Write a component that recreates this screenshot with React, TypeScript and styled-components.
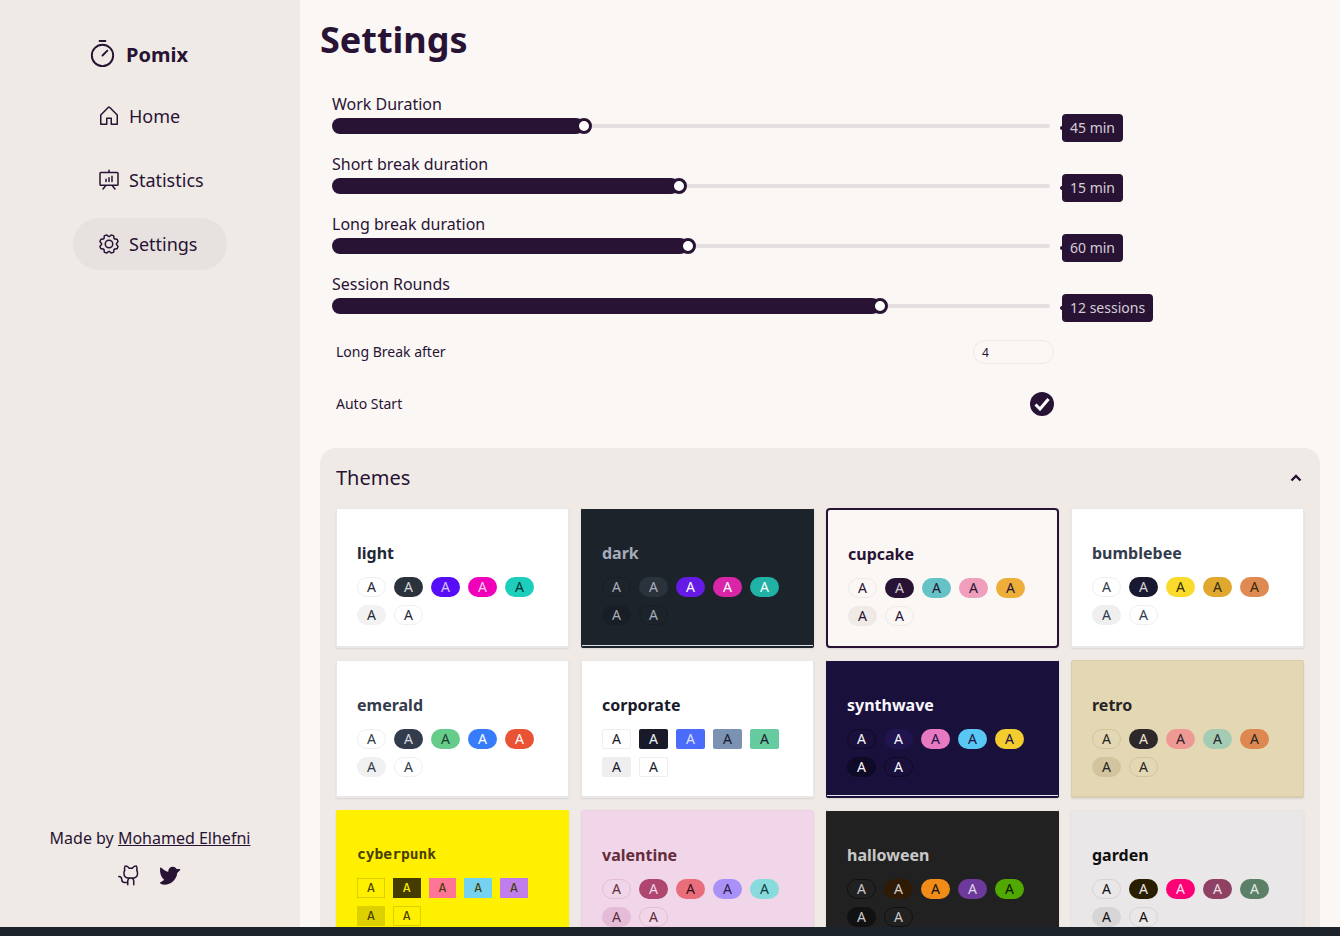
import React from 'react';
import styled, { createGlobalStyle } from 'styled-components';
import {
  PiGear,
  PiGithubLogo,
  PiHouse,
  PiPresentationChart,
  PiTimer,
  PiTwitterLogoFill,
} from 'react-icons/pi';

const ink = '#291334';
const panel = '#efeae6';
const paper = '#faf7f5';
const mono = "'DejaVu Sans Mono', monospace";

const GlobalStyle = createGlobalStyle`
  html, body {
    margin: 0;
    height: 100%;
    background: #1d232a;
    overflow: hidden;
  }
  * {
    box-sizing: border-box;
  }
  body {
    font-family: 'Noto Sans', sans-serif;
    color: ${ink};
  }
`;

const Shell = styled.div`
  display: flex;
  height: 927px;
  overflow: hidden;
  background: ${paper};
`;

const Sidebar = styled.aside`
  width: 300px;
  flex-shrink: 0;
  background: ${panel};
  display: flex;
  flex-direction: column;
  align-items: center;
  padding-top: 39px;
`;

const Brand = styled.div`
  display: flex;
  align-items: center;
  gap: 8px;
  height: 30px;
  font-size: 20px;
  font-weight: 700;
  margin: 0 25px 21px 0;
  svg {
    font-size: 31px;
  }
`;

const NavList = styled.nav`
  display: flex;
  flex-direction: column;
  gap: 12px;
  width: 154px;
`;

const NavItem = styled.div<{ $active?: boolean }>`
  display: flex;
  align-items: center;
  gap: 8px;
  height: 52px;
  padding-left: 24px;
  border-radius: 26px;
  font-size: 18px;
  background: ${(p) => (p.$active ? '#e7e2df' : 'transparent')};
  svg {
    font-size: 24px;
  }
`;

const Footer = styled.footer`
  margin-top: auto;
  padding-bottom: 40px;
  display: flex;
  flex-direction: column;
  align-items: center;
  gap: 14px;
  font-size: 16px;
  a {
    color: inherit;
  }
`;

const Socials = styled.div`
  display: flex;
  gap: 15px;
  svg {
    font-size: 24px;
    display: block;
  }
`;

const Main = styled.main`
  flex: 1;
  padding: 14px 20px 0;
  min-width: 0;
`;

const Title = styled.h1`
  margin: 0 0 26px;
  font-size: 36px;
  line-height: 52px;
  font-weight: 700;
`;

const SliderList = styled.div`
  display: flex;
  flex-direction: column;
  gap: 10px;
  padding-left: 12px;
`;

const SliderRow = styled.div`
  height: 50px;
`;

const SliderLabel = styled.div`
  font-size: 16px;
  line-height: 24px;
  height: 24px;
`;

const SliderLine = styled.div`
  display: flex;
  align-items: center;
  gap: 12px;
  height: 26px;
  margin-top: -1px;
`;

const Track = styled.div`
  position: relative;
  width: 718px;
  height: 4px;
  margin-top: -4px;
  border-radius: 2px;
  background: #e4e0e2;
`;

const Fill = styled.div`
  position: absolute;
  left: 0;
  top: -6px;
  height: 16px;
  border-radius: 8px;
  background: ${ink};
`;

const Thumb = styled.div`
  position: absolute;
  right: -8px;
  top: 0;
  width: 16px;
  height: 16px;
  border-radius: 50%;
  background: #fff;
  border: 3px solid ${ink};
`;

const Bubble = styled.div`
  position: relative;
  height: 28px;
  padding: 0 8px 2px;
  display: flex;
  align-items: center;
  border-radius: 4px;
  font-size: 14px;
  color: #d4cdd6;
  background: ${ink};
  &::before {
    content: '';
    position: absolute;
    left: -2px;
    top: 12px;
    width: 4px;
    height: 4px;
    border-radius: 50%;
    background: ${ink};
  }
`;

const Options = styled.div`
  margin-top: 4px;
`;

const OptionRow = styled.div`
  width: 718px;
  height: 52px;
  margin-left: 16px;
  display: flex;
  align-items: center;
  justify-content: space-between;
  font-size: 14px;
`;

const OptionLabel = styled.span`
  margin-bottom: 2px;
`;

const NumberBox = styled.div`
  width: 81px;
  height: 24px;
  padding-left: 8px;
  display: flex;
  align-items: center;
  border: 1px solid ${panel};
  border-radius: 12px;
  font-size: 12px;
`;

const Check = styled.div`
  width: 24px;
  height: 24px;
  border-radius: 50%;
  background: ${ink};
  display: flex;
  align-items: center;
  justify-content: center;
`;

const ThemesPanel = styled.section`
  margin-top: 18px;
  padding: 0 16px;
  background: ${panel};
  border-radius: 16px 16px 0 0;
  height: 600px;
`;

const ThemesHeader = styled.div`
  display: flex;
  align-items: center;
  justify-content: space-between;
  height: 60px;
  font-size: 20px;
  svg {
    margin-right: 2px;
  }
`;

const ThemesLabel = styled.span`
  margin-bottom: 2px;
`;

const ThemeGrid = styled.div`
  display: grid;
  grid-template-columns: repeat(4, 233px);
  grid-template-rows: 140px 138px 140px;
  gap: 12px;
`;

const Card = styled.div<{ $bg: string; $fg: string; $frame: string; $rim?: string; $selected?: boolean }>`
  height: 100%;
  padding: 24px 20px 0;
  background: ${(p) => p.$bg};
  color: ${(p) => p.$fg};
  border: ${(p) => (p.$selected ? 2 : 1)}px solid ${(p) => p.$frame};
  border-top-color: ${(p) => (p.$rim ? panel : p.$frame)};
  border-bottom-width: 2px;
  border-radius: ${(p) => (p.$selected ? 4 : 2)}px;
  box-shadow: ${(p) => (p.$rim ? `inset 0 -1px 0 ${p.$rim}, ` : '')}0 1px 2px rgba(41, 19, 52, 0.1);
`;

const CardName = styled.div<{ $mono?: boolean }>`
  font-family: ${(p) => (p.$mono ? mono : 'inherit')};
  font-size: ${(p) => (p.$mono ? 14.6 : 16)}px;
  font-weight: 700;
  line-height: 40px;
  height: 40px;
  margin-top: ${(p) => (p.$mono ? -1 : 0)}px;
  margin-bottom: ${(p) => (p.$mono ? 1 : 0)}px;
`;

const ChipGrid = styled.div`
  display: flex;
  flex-wrap: wrap;
  gap: 8px;
  width: 190px;
  margin-top: 4px;
`;

const Chip = styled.div<{ $bg: string; $fg: string; $line: string; $radius: number; $mono?: boolean }>`
  width: ${(p) => (p.$mono ? 27.75 : 29)}px;
  height: 20px;
  padding-bottom: 1px;
  display: flex;
  align-items: center;
  justify-content: center;
  font-family: ${(p) => (p.$mono ? mono : 'inherit')};
  font-size: ${(p) => (p.$mono ? 13 : 14)}px;
  background: ${(p) => p.$bg};
  color: ${(p) => p.$fg};
  border: 1px solid ${(p) => p.$line};
  border-radius: ${(p) => p.$radius}px;
`;

type ChipDef = [string, string];

interface ThemeDef {
  name: string;
  bg: string;
  fg: string;
  frame: string;
  rim?: string;
  line: string;
  radius?: number;
  chips: ChipDef[];
}

const themes: ThemeDef[] = [
  {
    name: 'light',
    bg: '#ffffff',
    fg: '#1f2937',
    frame: '#e8e8e8',
    line: '#eeeff0',
    chips: [
      ['#ffffff', '#1f2937'],
      ['#2a323c', '#d5d7da'],
      ['#570df8', '#d4c2fd'],
      ['#f000b8', '#fdd0f1'],
      ['#1ecebc', '#01312c'],
      ['#f2f2f2', '#1f2937'],
      ['#ffffff', '#1f2937'],
    ],
  },
  {
    name: 'dark',
    bg: '#1d232a',
    fg: '#a6adba',
    frame: '#1d232a',
    rim: '#e0e1e2',
    line: '#191e24',
    chips: [
      ['#1d232a', '#a6adba'],
      ['#2a323c', '#a6adba'],
      ['#661ae6', '#ffffff'],
      ['#d926a9', '#ffffff'],
      ['#1fb2a5', '#ffffff'],
      ['#191e24', '#a6adba'],
      ['#1d232a', '#a6adba'],
    ],
  },
  {
    name: 'cupcake',
    bg: paper,
    fg: ink,
    frame: ink,
    line: panel,
    chips: [
      [paper, ink],
      [ink, '#d4cdd6'],
      ['#65c3c8', ink],
      ['#ef9fbc', ink],
      ['#eeaf3a', ink],
      [panel, ink],
      [paper, ink],
    ],
  },
  {
    name: 'bumblebee',
    bg: '#ffffff',
    fg: '#333c4d',
    frame: '#e8e8ea',
    line: '#eeeff0',
    chips: [
      ['#ffffff', '#333c4d'],
      ['#181830', '#d1d1d6'],
      ['#fadb2c', '#332c0a'],
      ['#e0a82e', '#332c0a'],
      ['#df8a52', '#332c0a'],
      ['#efefef', '#333c4d'],
      ['#ffffff', '#333c4d'],
    ],
  },
  {
    name: 'emerald',
    bg: '#ffffff',
    fg: '#333c4d',
    frame: '#e8e8ea',
    line: '#eeeff0',
    chips: [
      ['#ffffff', '#333c4d'],
      ['#333c4d', '#d6d8db'],
      ['#66cc8a', '#223d30'],
      ['#377cfb', '#fff'],
      ['#ea5234', '#fff'],
      ['#f0f0f0', '#333c4d'],
      ['#ffffff', '#333c4d'],
    ],
  },
  {
    name: 'corporate',
    bg: '#ffffff',
    fg: '#181a2a',
    frame: '#e8e8ea',
    line: '#eeeff0',
    radius: 2,
    chips: [
      ['#ffffff', '#181a2a'],
      ['#181a2a', '#edf2f7'],
      ['#4b6bfb', '#dbe1fe'],
      ['#7b92b2', '#181a2a'],
      ['#67cba0', '#181a2a'],
      ['#eeeeee', '#181a2a'],
      ['#ffffff', '#181a2a'],
    ],
  },
  {
    name: 'synthwave',
    bg: '#1a103c',
    fg: '#f9f7fd',
    frame: '#1a103c',
    rim: '#e8e6ee',
    line: '#0f0a26',
    chips: [
      ['#1a103c', '#f9f7fd'],
      ['#20134e', '#f9f7fd'],
      ['#e779c1', '#201047'],
      ['#58c7f3', '#201047'],
      ['#f3cc30', '#201047'],
      ['#0f0a26', '#f9f7fd'],
      ['#1a103c', '#f9f7fd'],
    ],
  },
  {
    name: 'retro',
    bg: '#e4d8b4',
    fg: '#282425',
    frame: '#d9cfb0',
    line: '#d2c59d',
    chips: [
      ['#e4d8b4', '#282425'],
      ['#2e282a', '#ede6d4'],
      ['#ef9995', '#282425'],
      ['#a4cbb4', '#282425'],
      ['#dc8850', '#282425'],
      ['#d2c59d', '#282425'],
      ['#e4d8b4', '#282425'],
    ],
  },
  {
    name: 'cyberpunk',
    bg: '#fff000',
    fg: '#483f00',
    frame: '#fff000',
    line: '#ddd000',
    radius: 0,
    chips: [
      ['#fff000', '#483f00'],
      ['#443c00', '#fff000'],
      ['#ff7598', '#443c00'],
      ['#75d1f0', '#443c00'],
      ['#c07eec', '#443c00'],
      ['#ddd000', '#443c00'],
      ['#fff000', '#443c00'],
    ],
  },
  {
    name: 'valentine',
    bg: '#f0d6e8',
    fg: '#632c3b',
    frame: '#ecd2e4',
    line: '#e5bcd8',
    chips: [
      ['#f0d6e8', '#632c3b'],
      ['#af4670', '#f0d6e8'],
      ['#e96d7b', '#36101a'],
      ['#a991f7', '#2a1f4a'],
      ['#88dbdd', '#123c3d'],
      ['#e5bcd8', '#632c3b'],
      ['#f0d6e8', '#632c3b'],
    ],
  },
  {
    name: 'halloween',
    bg: '#212121',
    fg: '#c8c8c8',
    frame: '#212121',
    rim: '#e0e0e0',
    line: '#111111',
    chips: [
      ['#212121', '#c8c8c8'],
      ['#2f1b05', '#d0cdca'],
      ['#f28c18', '#111111'],
      ['#6d3a9c', '#e0d8eb'],
      ['#51a800', '#0a1400'],
      ['#111111', '#c8c8c8'],
      ['#212121', '#c8c8c8'],
    ],
  },
  {
    name: 'garden',
    bg: '#e9e7e7',
    fg: '#100f0f',
    frame: '#e6e4e4',
    line: '#d7d5d5',
    chips: [
      ['#e9e7e7', '#100f0f'],
      ['#291e00', '#e9e7e7'],
      ['#fe0075', '#ffe6f1'],
      ['#8e4162', '#f0dfe7'],
      ['#5c7f67', '#e4ece7'],
      ['#d7d5d5', '#100f0f'],
      ['#e9e7e7', '#100f0f'],
    ],
  },
];

const sliders = [
  { label: 'Work Duration', value: '45 min', fill: 252 },
  { label: 'Short break duration', value: '15 min', fill: 347 },
  { label: 'Long break duration', value: '60 min', fill: 356 },
  { label: 'Session Rounds', value: '12 sessions', fill: 548 },
];

const App = () => (
  <>
    <GlobalStyle />
    <Shell>
      <Sidebar>
        <Brand>
          <PiTimer />
          Pomix
        </Brand>
        <NavList>
          <NavItem>
            <PiHouse />
            Home
          </NavItem>
          <NavItem>
            <PiPresentationChart />
            Statistics
          </NavItem>
          <NavItem $active>
            <PiGear />
            Settings
          </NavItem>
        </NavList>
        <Footer>
          <div>
            Made by <a href="#author">Mohamed Elhefni</a>
          </div>
          <Socials>
            <PiGithubLogo />
            <PiTwitterLogoFill />
          </Socials>
        </Footer>
      </Sidebar>
      <Main>
        <Title>Settings</Title>
        <SliderList>
          {sliders.map((s) => (
            <SliderRow key={s.label}>
              <SliderLabel>{s.label}</SliderLabel>
              <SliderLine>
                <Track>
                  <Fill style={{ width: s.fill }}>
                    <Thumb />
                  </Fill>
                </Track>
                <Bubble>{s.value}</Bubble>
              </SliderLine>
            </SliderRow>
          ))}
        </SliderList>
        <Options>
          <OptionRow>
            <OptionLabel>Long Break after</OptionLabel>
            <NumberBox>4</NumberBox>
          </OptionRow>
          <OptionRow>
            <OptionLabel>Auto Start</OptionLabel>
            <Check>
              <svg width="16" height="14" viewBox="0 0 16 14" fill="none">
                <path d="M1.5 7.5 L6 12 L14.5 2" stroke="#fff" strokeWidth="3" />
              </svg>
            </Check>
          </OptionRow>
        </Options>
        <ThemesPanel>
          <ThemesHeader>
            <ThemesLabel>Themes</ThemesLabel>
            <svg width="12" height="8" viewBox="0 0 12 8" fill="none">
              <path d="M1.5 6.5 L6 2 L10.5 6.5" stroke={ink} strokeWidth="2.4" />
            </svg>
          </ThemesHeader>
          <ThemeGrid>
            {themes.map((t) => (
              <Card
                key={t.name}
                $bg={t.bg}
                $fg={t.fg}
                $frame={t.frame}
                $rim={t.rim}
                $selected={t.name === 'cupcake'}
              >
                <CardName $mono={t.name === 'cyberpunk'}>{t.name}</CardName>
                <ChipGrid>
                  {t.chips.map(([bg, fg], i) => (
                    <Chip
                      key={i}
                      $bg={bg}
                      $fg={fg}
                      $line={bg === t.bg ? t.line : 'transparent'}
                      $radius={t.radius ?? 10}
                      $mono={t.name === 'cyberpunk'}
                    >
                      A
                    </Chip>
                  ))}
                </ChipGrid>
              </Card>
            ))}
          </ThemeGrid>
        </ThemesPanel>
      </Main>
    </Shell>
  </>
);

export default App;
